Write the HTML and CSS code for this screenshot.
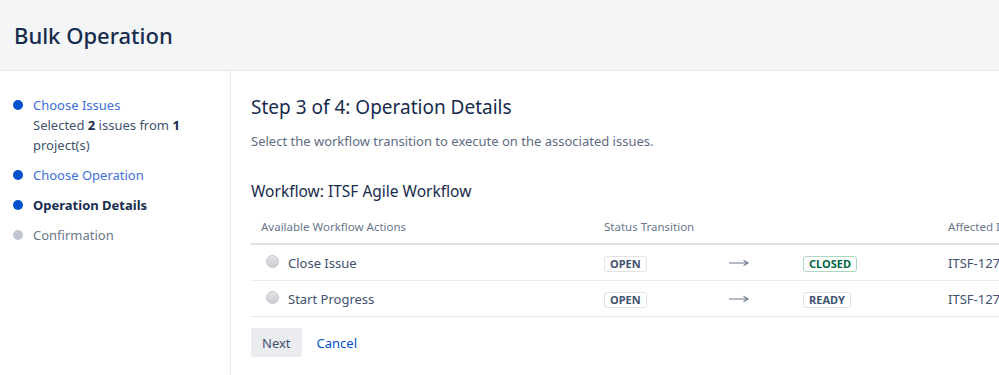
FILE: index.html
```html
<!DOCTYPE html>
<html>
<head>
    <title>Bulk Operation</title>
    <link rel="stylesheet" href="styles.css">
</head>
<body>
    <header class="page-header">
        <h1>Bulk Operation</h1>
    </header>
    <div class="layout">
        <nav class="steps">
            <ul>
                <li class="step done">
                    <a href="#">Choose Issues</a>
                    <div class="step-note">Selected <b>2</b> issues from <b>1</b> project(s)</div>
                </li>
                <li class="step done"><a href="#">Choose Operation</a></li>
                <li class="step current">Operation Details</li>
                <li class="step todo">Confirmation</li>
            </ul>
        </nav>
        <main class="content">
            <h2>Step 3 of 4: Operation Details</h2>
            <p class="desc">Select the workflow transition to execute on the associated issues.</p>
            <h3>Workflow: ITSF Agile Workflow</h3>
            <table class="actions">
                <colgroup>
                    <col class="w-action">
                    <col class="w-from">
                    <col class="w-arrow">
                    <col class="w-to">
                    <col class="w-affected">
                </colgroup>
                <thead>
                    <tr>
                        <th>Available Workflow Actions</th>
                        <th colspan="3">Status Transition</th>
                        <th>Affected Issues</th>
                    </tr>
                </thead>
                <tbody>
                    <tr>
                        <td><label><span class="radio"></span>Close Issue</label></td>
                        <td><span class="lozenge">Open</span></td>
                        <td class="arrow">
                            <svg width="20" height="8" viewBox="0 0 20 8"><path d="M0 4H18.5M14.5 1.2L19 4L14.5 6.8" fill="none" stroke="#6b778c" stroke-width="1.1"/></svg>
                        </td>
                        <td><span class="lozenge success">Closed</span></td>
                        <td>ITSF-1270, ITSF-1271</td>
                    </tr>
                    <tr>
                        <td><label><span class="radio"></span>Start Progress</label></td>
                        <td><span class="lozenge">Open</span></td>
                        <td class="arrow">
                            <svg width="20" height="8" viewBox="0 0 20 8"><path d="M0 4H18.5M14.5 1.2L19 4L14.5 6.8" fill="none" stroke="#6b778c" stroke-width="1.1"/></svg>
                        </td>
                        <td><span class="lozenge">Ready</span></td>
                        <td>ITSF-1270, ITSF-1271</td>
                    </tr>
                </tbody>
            </table>
            <div class="buttons">
                <button class="btn">Next</button>
                <a href="#" class="cancel">Cancel</a>
            </div>
        </main>
    </div>
</body>
</html>
```

FILE: styles.css
```css
html, body {
    margin: 0;
    padding: 0;
    height: 100%;
    overflow: hidden;
}
body {
    font-family: "Noto Sans", "Open Sans", sans-serif;
    font-size: 13px;
    color: #172b4d;
    background-color: white;
}
.page-header {
    background-color: #f4f5f7;
    border-bottom: 1px solid #e4e6ea;
    height: 71px;
    box-sizing: border-box;
    padding: 0 14px;
    display: flex;
    align-items: center;
}
.page-header h1 {
    margin: 0;
    font-size: 22px;
    font-weight: 500;
    color: #172b4d;
}
.layout {
    display: flex;
    height: 100%;
}
.steps {
    width: 231px;
    flex-shrink: 0;
    border-right: 1px solid #ebecf0;
    padding-top: 24px;
    box-sizing: border-box;
}
.steps ul {
    list-style: none;
    margin: 0;
    padding: 0 10px 0 33px;
}
.step {
    position: relative;
    line-height: 20px;
    margin-bottom: 10px;
    color: #172b4d;
}
.step:before {
    content: "";
    position: absolute;
    left: -20px;
    top: 5px;
    width: 10px;
    height: 10px;
    border-radius: 50%;
    background-color: #0052cc;
}
.step a {
    color: #3d6fd6;
    text-decoration: none;
}
.step-note {
    color: #42526e;
}
.step-note b {
    color: #172b4d;
}
.step.current {
    font-weight: bold;
}
.step.todo {
    color: #6b778c;
}
.step.todo:before {
    background-color: #c1c7d0;
}
.content {
    padding: 22px 0 0 20px;
}
.content h2 {
    margin: 0;
    font-size: 19px;
    font-weight: 400;
    line-height: 28px;
}
.desc {
    margin: 10px 0 0;
    color: #5e6c84;
    line-height: 20px;
}
.content h3 {
    margin: 29px 0 0;
    font-size: 15.5px;
    font-weight: 400;
    line-height: 22px;
}
.actions {
    border-collapse: collapse;
    table-layout: fixed;
    margin-top: 7px;
    width: 887px;
}
.w-action { width: 343px; }
.w-from { width: 120px; }
.w-arrow { width: 79px; }
.w-to { width: 145px; }
.w-affected { width: 200px; }
.actions th {
    text-align: left;
    font-size: 11.5px;
    font-weight: 400;
    color: #6b778c;
    padding: 9px 10px 7px;
    border-bottom: 2px solid #dfe1e6;
    line-height: 18px;
    white-space: nowrap;
}
.actions td {
    padding: 0 10px;
    height: 35px;
    border-bottom: 1px solid #ebecf0;
    color: #42526e;
    white-space: nowrap;
}
.actions label {
    display: flex;
    align-items: center;
}
.actions td.arrow {
    padding-left: 15px;
    line-height: 0;
}
.radio {
    display: inline-block;
    width: 11px;
    height: 11px;
    border-radius: 50%;
    border: 1px solid #c4c7cc;
    background: linear-gradient(#e3e4e7, #c9ccd1);
    margin: 0 9px 3px 5px;
}
.lozenge {
    display: inline-block;
    border: 1px solid #dfe1e6;
    border-radius: 3px;
    padding: 0 5px;
    font-size: 11px;
    font-weight: bold;
    line-height: 14px;
    text-transform: uppercase;
    color: #42526e;
}
.lozenge.success {
    border-color: #abd9bd;
    color: #006644;
}
.buttons {
    display: flex;
    align-items: center;
    margin-top: 11px;
}
.btn {
    background-color: #ebecf0;
    border: none;
    border-radius: 3px;
    font-family: inherit;
    font-size: 13px;
    color: #42526e;
    padding: 0 11px;
    height: 29px;
}
.cancel {
    color: #0052cc;
    text-decoration: none;
    margin-left: 15px;
}
```
